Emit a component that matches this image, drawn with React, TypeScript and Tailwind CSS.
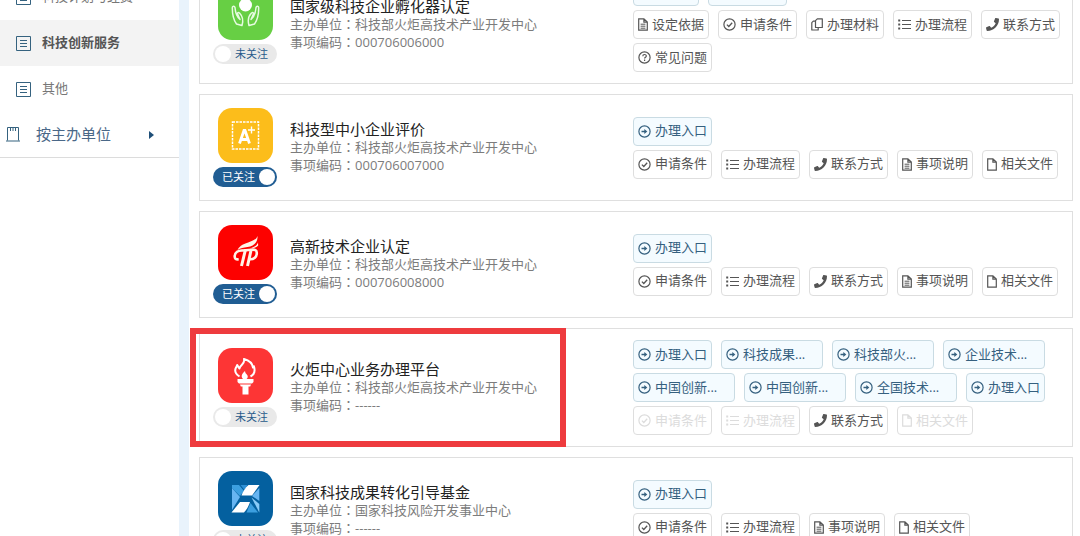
import type { ReactNode } from 'react';
import { FaPhone } from 'react-icons/fa';

type IconName = 'enter' | 'check' | 'copy' | 'list' | 'phone' | 'help' | 'doc' | 'file';

type Action = { icon: IconName; label: string; wide?: boolean; disabled?: boolean };

type Service = {
  title: string;
  org: string;
  code: string;
  followed: boolean;
  logo: ReactNode;
  logoBg: string;
  entries: Action[];
  actions: Action[];
  highlighted?: boolean;
};

function ActionIcon({ name }: { name: IconName }) {
  const line = { fill: 'none', stroke: 'currentColor', strokeWidth: 1.2 };

  switch (name) {
    case 'enter':
      return (
        <svg className="size-[13px] shrink-0" viewBox="0 0 13 13" {...line}>
          <circle cx="6.5" cy="6.5" r="5.6" />
          <path d="M3.5 6.5h3.5" strokeWidth="1.5" />
          <path d="M6.3 4 9.3 6.5 6.3 9z" fill="currentColor" stroke="none" />
        </svg>
      );
    case 'check':
      return (
        <svg className="size-[13px] shrink-0" viewBox="0 0 13 13" {...line}>
          <circle cx="6.5" cy="6.5" r="5.6" />
          <path d="m3.9 6.6 1.9 1.9 3.4-3.7" strokeWidth="1.3" />
        </svg>
      );
    case 'copy':
      return (
        <svg className="h-[13px] w-3 shrink-0" viewBox="0 0 12 13" {...line} strokeLinejoin="round">
          <path d="M6.3.8h5v8.700H4.500V2.600z" />
          <path d="M4.500 3.200H2.300L.8 4.700v7.300h6.400V9.600" />
        </svg>
      );
    case 'list':
      return (
        <svg className="size-[13px] shrink-0" viewBox="0 0 13 13" {...line}>
          <path d="M4 2.5h9M4 6.5h9M4 10.5h9" />
          <path d="M.2 2.5h2M.2 6.5h2M.2 10.5h2" strokeWidth="1.8" />
        </svg>
      );
    case 'phone':
      return <FaPhone className="size-[13px] shrink-0" />;
    case 'help':
      return (
        <svg className="size-[13px] shrink-0" viewBox="0 0 13 13" {...line}>
          <circle cx="6.5" cy="6.5" r="5.6" />
          <path d="M4.8 5.2c0-2.3 3.5-2.2 3.5-.2 0 1.3-1.7 1.3-1.7 2.6M6.6 8.6V10" />
        </svg>
      );
    case 'doc':
      return (
        <svg className="h-[13px] w-2.5 shrink-0" viewBox="0 0 10 13" {...line}>
          <path d="M.7.8h5.2l3.4 3.3v8.1H.7zM5.9.9v3.3h3.3" />
          <path d="M2.6 6.2h4.8M2.6 8.2h4.8M2.6 10.2h4.8" strokeWidth="1" />
        </svg>
      );
    case 'file':
      return (
        <svg className="h-[13px] w-2.5 shrink-0" viewBox="0 0 10 13" {...line}>
          <path d="M.7.8h5.2l3.4 3.3v8.1H.7zM5.9.9v3.3h3.3" />
        </svg>
      );
  }
}

const handsLogo = (
  <svg className="size-full" viewBox="0 0 55 55" fill="none" stroke="#e6fbe0" strokeWidth="1.5" strokeLinejoin="round">
    <circle cx="27.5" cy="20" r="6.5" fill="#fff" stroke="none" />
    <path d="M24 40.500c1.500-5 1-9-2.500-12.500-1.500-1-2.500 0-1.700 1.500l2.200 5c-3-2.500-4.500-5-5-12-.5-1.700-2.700-1.500-2.700.3 0 7 1 12 4.200 16.200z" />
    <path d="M31 40.500c-1.500-5-1-9 2.500-12.500 1.500-1 2.500 0 1.700 1.500l-2.200 5c3-2.500 4.500-5 5-12 .5-1.700 2.700-1.500 2.700.3 0 7-1 12-4.200 16.200z" />
  </svg>
);

const gradeLogo = (
  <svg className="size-full" viewBox="0 0 55 55" fill="none" stroke="#fff">
    <rect x="14.500" y="14" width="26" height="27" strokeWidth="1.500" strokeDasharray="2.500 1" />
    <path d="M21.500 35.500 26 22.500h1l4.500 13M23 31.500h7" strokeWidth="2.800" />
    <path d="M33.500 18.500v7M30 22h7" strokeWidth="1.400" />
  </svg>
);

const flyingTorchLogo = (
  <svg className="size-full" viewBox="0 0 55 55" fill="#fff4e8">
    <path d="M39.500 11c-1 3-3 4-7 5.500C26 19 22 20 19.500 25c3-2 6-2.200 10-3 6.500-1.300 10.500-4.500 10-11z" />
    <path d="M40 17.500c-1 3-3.500 4.700-8 5.700 3.500 0 6.500-.6 8.200-2.700z" />
    <g fill="none" stroke="#fff4e8" strokeWidth="2.6">
      <path d="M25 25.500c-5-.5-8 2-8.300 5.500-.2 2.500 1 3.700 4 3.300" />
      <path d="M27.500 24.500 23.500 41" strokeWidth="3" />
      <path d="M33 25.500 29.500 41" strokeWidth="3" />
      <path d="M31.500 34.300c4.500.2 7.300-2.300 7.300-6.300 0-3-2-3.500-5-3.300l-9 .8" />
    </g>
  </svg>
);

const torchLogo = (
  <svg className="size-full" viewBox="0 0 55 55" fill="#fff">
    <path
      d="M21.500 28.500c-4-2.500-5-6-3.500-9 .5-1 1-1.700 1.200-2.500.8 1.500 1.300 2.500 2.300 3.500.5-4 6-4.500 4.500-9.500 5.500 1.500 8.500 5 9 8.500.3-.3.700-.7.9-1.200 1.500 4.500.6 8-3.400 10.200"
      fill="none"
      stroke="#fff"
      strokeWidth="2"
      strokeLinejoin="round"
    />
    <path d="M25 31c-2.500-2.500-1-5.500 2-8 .2 2 1 2.500 1.800 3.500 1.700 1.800 1 3.500-.3 4.500zM19.500 31h16v3l-1.500 1.500h-13L19.500 34zM22 36.500h11l-.8 2h-9.400zM24.500 38h6v8.500h-6z" />
  </svg>
);

const fundLogo = (
  <svg className="size-full" viewBox="0 0 55 55">
    <path d="M14 14h7l5 6-4 5-8-8z" fill="#3c9fe0" />
    <path d="M14 17l8 9-8 13z" fill="#67b5f2" />
    <path d="M22.500 14h7l-3 5z" fill="#2d8fd5" />
    <path d="M41.300 17v13L34 25z" fill="#67b5f2" />
    <path d="M33.500 26.500 41.300 33v8.500z" fill="#8acbf8" />
    <path d="m32.500 32 7.500 9.500H28.500z" fill="#3c9fe0" />
    <path d="M23.500 24.500c1.500-4 3.500-7.500 7-10.500h11l-7.500 10.500z" fill="#fff" />
    <path d="M32 31c-1.500 4-3 7.500-6 10.500H13.500L22 31z" fill="#fff" />
  </svg>
);

const enter: Action = { icon: 'enter', label: '办理入口' };

const services: Service[] = [
  {
    title: '国家级科技企业孵化器认定',
    org: '科技部火炬高技术产业开发中心',
    code: '000706006000',
    followed: false,
    logo: handsLogo,
    logoBg: 'bg-[#67cf44]',
    entries: [{ icon: 'enter', label: '申报书' }, enter],
    actions: [
      { icon: 'doc', label: '设定依据' },
      { icon: 'check', label: '申请条件' },
      { icon: 'copy', label: '办理材料' },
      { icon: 'list', label: '办理流程' },
      { icon: 'phone', label: '联系方式' },
      { icon: 'help', label: '常见问题' },
    ],
  },
  {
    title: '科技型中小企业评价',
    org: '科技部火炬高技术产业开发中心',
    code: '000706007000',
    followed: true,
    logo: gradeLogo,
    logoBg: 'bg-[#fcbd1b]',
    entries: [enter],
    actions: [
      { icon: 'check', label: '申请条件' },
      { icon: 'list', label: '办理流程' },
      { icon: 'phone', label: '联系方式' },
      { icon: 'doc', label: '事项说明' },
      { icon: 'file', label: '相关文件' },
    ],
  },
  {
    title: '高新技术企业认定',
    org: '科技部火炬高技术产业开发中心',
    code: '000706008000',
    followed: true,
    logo: flyingTorchLogo,
    logoBg: 'bg-[#fd0100]',
    entries: [enter],
    actions: [
      { icon: 'check', label: '申请条件' },
      { icon: 'list', label: '办理流程' },
      { icon: 'phone', label: '联系方式' },
      { icon: 'doc', label: '事项说明' },
      { icon: 'file', label: '相关文件' },
    ],
  },
  {
    title: '火炬中心业务办理平台',
    org: '科技部火炬高技术产业开发中心',
    code: '------',
    followed: false,
    logo: torchLogo,
    logoBg: 'bg-[#fd3535]',
    highlighted: true,
    entries: [
      enter,
      { icon: 'enter', label: '科技成果...', wide: true },
      { icon: 'enter', label: '科技部火...', wide: true },
      { icon: 'enter', label: '企业技术...', wide: true },
      { icon: 'enter', label: '中国创新...', wide: true },
      { icon: 'enter', label: '中国创新...', wide: true },
      { icon: 'enter', label: '全国技术...', wide: true },
      enter,
    ],
    actions: [
      { icon: 'check', label: '申请条件', disabled: true },
      { icon: 'list', label: '办理流程', disabled: true },
      { icon: 'phone', label: '联系方式' },
      { icon: 'file', label: '相关文件', disabled: true },
    ],
  },
  {
    title: '国家科技成果转化引导基金',
    org: '国家科技风险开发事业中心',
    code: '------',
    followed: false,
    logo: fundLogo,
    logoBg: 'bg-[#04609f]',
    entries: [enter],
    actions: [
      { icon: 'check', label: '申请条件' },
      { icon: 'list', label: '办理流程' },
      { icon: 'doc', label: '事项说明' },
      { icon: 'file', label: '相关文件' },
    ],
  },
];

function ActionButton({ action, primary }: { action: Action; primary?: boolean }) {
  const tone = primary
    ? 'border-[#c9dbe3] bg-[#f4fbff] text-[#35607f]'
    : 'border-[#dedede] bg-white text-[#555] disabled:text-[#dcdcdc]';

  return (
    <button
      type="button"
      disabled={action.disabled}
      className={`flex h-[29px] items-center gap-1 rounded border px-1 text-[13px] whitespace-nowrap ${tone} ${action.wide ? 'w-[102px]' : ''}`}
    >
      <ActionIcon name={action.icon} />
      {action.label}
    </button>
  );
}

function FollowSwitch({ followed }: { followed: boolean }) {
  return (
    <label className="flex h-5 w-16 cursor-pointer items-center gap-1 rounded-full bg-[#e9e9e9] px-0.5 text-[#27598a] has-checked:flex-row-reverse has-checked:bg-[#205d93] has-checked:text-white">
      <input type="checkbox" defaultChecked={followed} className="sr-only" />
      <span className="size-4 shrink-0 rounded-full bg-white" />
      <span className="text-[11px] leading-5 whitespace-nowrap">{followed ? '已关注' : '未关注'}</span>
    </label>
  );
}

function Field({ name, value }: { name: string; value: string }) {
  return (
    <p>
      {name}
      <span className="font-['Noto_Sans_CJK_TC',sans-serif]" lang="zh-TW">：</span>
      {value}
    </p>
  );
}

function ServiceCard({ service }: { service: Service }) {
  return (
    <article className="relative flex min-h-[107px] items-center border border-[#dfdfdf] bg-white py-[11px] pl-[13px]">
      <div className="flex w-16 flex-col items-center gap-1">
        <div className={`size-[55px] overflow-hidden rounded-[14px] ${service.logoBg}`}>{service.logo}</div>
        <FollowSwitch followed={service.followed} />
      </div>
      <div className="ml-[13px] min-w-0 flex-1 pb-0.5 text-[13px] leading-[18px] text-[#7c7c7c]">
        <h2 className="text-[15px] leading-[18px] text-[#222]">{service.title}</h2>
        <Field name="主办单位" value={service.org} />
        <Field name="事项编码" value={service.code} />
      </div>
      <div className="flex w-[439px] shrink-0 flex-col gap-1 pr-2">
        <div className="flex flex-wrap gap-x-[9px] gap-y-1">
          {service.entries.map((action, i) => (
            <ActionButton key={i} action={action} primary />
          ))}
        </div>
        <div className="flex flex-wrap gap-x-[9px] gap-y-1">
          {service.actions.map((action) => (
            <ActionButton key={action.label} action={action} />
          ))}
        </div>
      </div>
      {service.highlighted && (
        <div className="pointer-events-none absolute -inset-y-px -left-2.5 w-[376px] border-6 border-[#ee3b3e]" />
      )}
    </article>
  );
}

function ListIcon() {
  return (
    <svg className="size-[15px] shrink-0" viewBox="0 0 15 15" fill="none" stroke="#35627f">
      <path d="M.5.5h14v14H.5zM4 4.500h7M4 7.500h7M4 10.500h7" />
    </svg>
  );
}

function Sidebar() {
  const items = ['科技计划与经费', '科技创新服务', '其他'];

  return (
    <aside className="w-[179px] shrink-0 bg-white">
      <nav className="-mt-[26px] border-b border-[#dcdcdc]">
        {items.map((item) => (
          <a
            key={item}
            href="#"
            className={`flex h-[46px] items-center gap-[11px] pl-4 text-[13px] ${
              item === '科技创新服务' ? 'bg-[#f3f3f3] font-bold text-[#555]' : 'text-[#777]'
            }`}
          >
            <ListIcon />
            {item}
          </a>
        ))}
        <a href="#" className="flex h-[45px] items-center pr-[25px] pl-1.5 text-[15px] text-[#4a6888]">
          <svg className="mr-4 h-[15px] w-3.5 shrink-0" viewBox="0 0 14 15" fill="none" stroke="#35627f">
            <path d="M1.500 13.500V.5h11v13M0 14h14M4.500 1v3M7 1v3M9.500 1v3" />
          </svg>
          按主办单位
          <svg className="ml-auto h-2 w-[5px]" viewBox="0 0 5 8" fill="#1f4f78">
            <path d="M0 0l5 4-5 4z" />
          </svg>
        </a>
      </nav>
    </aside>
  );
}

export default function App() {
  return (
    <div className="flex h-screen overflow-hidden bg-[#e9f3fc] font-['Open_Sans','Noto_Sans_CJK_SC',sans-serif]">
      <Sidebar />
      <main className="ml-2.5 min-w-0 flex-1 bg-white pr-[7px] pl-2.5">
        <div className="-mt-[35px] flex flex-col gap-2.5">
          {services.map((service) => (
            <ServiceCard key={service.title} service={service} />
          ))}
        </div>
      </main>
    </div>
  );
}
